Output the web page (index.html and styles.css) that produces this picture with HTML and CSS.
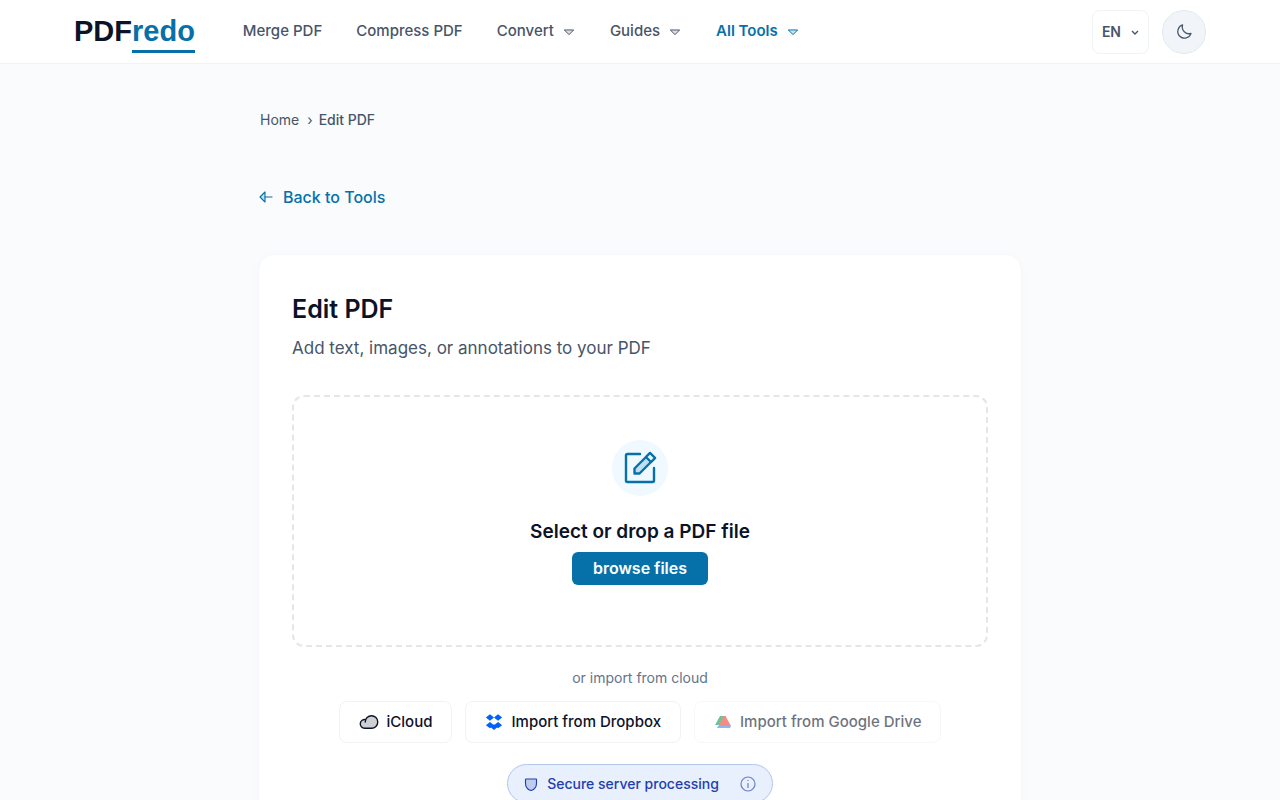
FILE: index.html
```html
<!DOCTYPE html>
<html lang="en">
<head>
<meta charset="utf-8">
<meta name="viewport" content="width=device-width, initial-scale=1">
<title>Edit PDF - PDFredo</title>
<link rel="stylesheet" href="styles.css">
</head>
<body>
<header class="site-header">
  <div class="header-inner">
    <a class="logo" href="#">PDF<span class="logo-accent">redo</span></a>
    <nav class="main-nav" aria-label="Main">
      <a href="#">Merge PDF</a>
      <a href="#">Compress PDF</a>
      <a href="#">Convert <svg class="caret" viewBox="0 0 256 256" aria-hidden="true"><path d="M208 96l-80 80-80-80Z"/></svg></a>
      <a href="#">Guides <svg class="caret" viewBox="0 0 256 256" aria-hidden="true"><path d="M208 96l-80 80-80-80Z"/></svg></a>
      <a class="active" href="#">All Tools <svg class="caret" viewBox="0 0 256 256" aria-hidden="true"><path d="M208 96l-80 80-80-80Z"/></svg></a>
    </nav>
    <div class="header-actions">
      <button class="language" type="button">EN <svg viewBox="0 0 12 12" aria-hidden="true"><path d="M3 5l3 3 3-3"/></svg></button>
      <button class="theme" type="button" aria-label="Dark mode"><svg class="duo" viewBox="0 0 256 256" aria-hidden="true"><path d="M108.110 28.110A96.090 96.090 0 0 0 227.890 147.890 96 96 0 1 1 108.110 28.110Z"/></svg></button>
    </div>
  </div>
</header>
<main class="page">
  <nav class="breadcrumb" aria-label="Breadcrumb">
    <a href="#">Home</a><span class="separator" aria-hidden="true">›</span><span class="current" aria-current="page">Edit PDF</span>
  </nav>
  <a class="back" href="#"><svg class="duo" viewBox="0 0 256 256" aria-hidden="true"><path d="M112 48v160L32 128Z"/><path d="M112 128h112"/></svg>Back to Tools</a>
  <section class="card">
    <h1>Edit PDF</h1>
    <p class="subtitle">Add text, images, or annotations to your PDF</p>
    <div class="dropzone">
      <div class="drop-icon">
        <svg viewBox="0 0 40 40" aria-hidden="true">
          <path d="M20 6H7.500Q6 6 6 7.500v25Q6 34 7.500 34h25q1.500 0 1.500-1.500V20"/>
          <path class="tint" d="M14.500 25.500v-5L30 5l5 5-15.500 15.500Z"/>
          <path class="tip" d="M30 5l5 5-4 4-5-5Z"/>
        </svg>
      </div>
      <h2>Select or drop a PDF file</h2>
      <button class="browse" type="button">browse files</button>
    </div>
    <p class="cloud-label">or import from cloud</p>
    <div class="cloud-row">
      <button class="cloud" type="button"><svg class="duo icloud" viewBox="0 0 256 256" aria-hidden="true"><path d="M80 128a80 80 0 1 1 80 80H72a56 56 0 1 1 13.920-110.270"/></svg>iCloud</button>
      <button class="cloud" type="button"><svg class="dropbox" viewBox="0 0 20 20" aria-hidden="true"><path d="M5.500 1.500L10 5 5.500 8.500 1 5ZM14.500 1.500L19 5l-4.500 3.500L10 5ZM5.500 10l4.500 3.500L5.500 17 1 13.500ZM14.500 10l4.500 3.500-4.500 3.500-4.500-3.500ZM10 12.500l4 3-4 3.500-4-3.500Z"/></svg>Import from Dropbox</button>
      <button class="cloud" type="button" disabled><svg viewBox="0 0 18 18" aria-hidden="true"><path fill="#0f9d58" d="M6 3h6L6.500 12H1Z"/><path fill="#ea4335" d="M9.500 3h2L17 13H4.500Z"/><path fill="#4285f4" d="M4 13h13l-1 2H3Z"/></svg>Import from Google Drive</button>
    </div>
    <button class="secure" type="button">
      <svg class="duo shield" viewBox="0 0 256 256" aria-hidden="true"><path d="M40 114.790V56a8 8 0 0 1 8-8H208a8 8 0 0 1 8 8v58.770c0 84.180-71.310 112.070-85.540 116.800a7.540 7.540 0 0 1-4.920 0C111.310 226.860 40 199 40 114.790Z"/></svg>
      <span>Secure server processing</span>
      <svg class="info" viewBox="0 0 18 18" aria-hidden="true"><circle cx="9" cy="9" r="7"/><path d="M9 8v5M9 5v1"/></svg>
    </button>
  </section>
</main>
</body>
</html>
```

FILE: styles.css
```css
* { box-sizing: border-box; }

body {
  margin: 0;
  background: #f9fbfd;
  color: #0b1329;
  font-family: Inter, "Liberation Sans", sans-serif;
  font-size: 16px;
  line-height: 24px;
}

a { color: inherit; text-decoration: none; }
button { font: inherit; color: inherit; cursor: pointer; }
h1, h2, p { margin: 0; }
svg { flex: none; }

.duo, .caret {
  fill: currentColor;
  fill-opacity: 0.2;
  stroke: currentColor;
  stroke-width: 18;
  stroke-linecap: round;
  stroke-linejoin: round;
}

.site-header { background: #fff; border-bottom: 1px solid #f0f3f6; }

.header-inner {
  display: flex;
  align-items: center;
  max-width: 1180px;
  height: 63px;
  margin: 0 auto;
  padding: 0 24px;
}

.logo {
  display: flex;
  font: bold 29px/34px "Liberation Sans", Arial, sans-serif;
  padding-top: 4px;
}
.logo-accent { color: #0671a9; border-bottom: 3px solid #0671a9; padding-bottom: 2px; }

.main-nav {
  display: flex;
  gap: 34px;
  margin-left: 48px;
  padding-bottom: 2px;
  color: #475569;
  font-size: 15px;
  font-weight: 500;
}
.main-nav a { display: flex; align-items: center; gap: 8px; }
.main-nav .active { color: #0671a9; font-weight: 600; }
.caret { width: 14px; height: 14px; margin-top: 2px; }

.header-actions { display: flex; gap: 13px; margin-left: auto; }

.language {
  display: flex;
  align-items: center;
  gap: 8px;
  height: 44px;
  padding: 0 7px 0 9px;
  border: 1px solid #f0f3f6;
  border-radius: 8px;
  background: #fff;
  color: #475569;
  font-size: 14px;
  font-weight: 600;
}
.language svg { width: 12px; height: 12px; fill: none; stroke: currentColor; stroke-width: 1.4; }

.theme {
  display: grid;
  place-items: center;
  width: 44px;
  height: 44px;
  padding: 0;
  border: 1px solid #e4e9ef;
  border-radius: 50%;
  background: #f1f5f9;
  color: #475569;
}
.theme svg { width: 18px; height: 18px; fill: none; }

.page { max-width: 812px; margin: 0 auto; padding: 44px 24px 0; }

.breadcrumb {
  display: flex;
  padding-left: 2px;
  color: #475569;
  font-size: 14px;
}
.separator { margin: 0 6px 0 8px; }
.current { font-weight: 500; }

.back {
  display: inline-flex;
  align-items: center;
  gap: 9px;
  margin-top: 53px;
  color: #0671a9;
  font-weight: 500;
}
.back svg { width: 16px; height: 16px; }

.card {
  display: flex;
  flex-direction: column;
  margin-top: 43px;
  padding: 34px 33px 40px;
  border: 1px solid #f5f7fa;
  border-radius: 16px;
  background: #fff;
  box-shadow: 0 2px 12px rgba(15, 23, 42, 0.02);
}
.card h1 { font-size: 25px; font-weight: 600; line-height: 40px; }
.subtitle { color: #475569; font-size: 17px; line-height: 28px; margin-top: 5px; }

.dropzone {
  display: flex;
  flex-direction: column;
  align-items: center;
  margin-top: 33px;
  padding: 43px 24px 60px;
  border: 2px dashed #e3e6ea;
  border-radius: 12px;
}
.drop-icon {
  display: grid;
  place-items: center;
  width: 56px;
  height: 56px;
  border-radius: 50%;
  background: #f0f9ff;
  color: #0671a9;
}
.drop-icon svg {
  width: 40px;
  height: 40px;
  fill: none;
  stroke: currentColor;
  stroke-width: 2.4;
  stroke-linejoin: round;
  stroke-linecap: round;
}
.drop-icon .tint { fill: #bddff1; }
.drop-icon .tip { fill: #f0f9ff; }

.dropzone h2 { margin-top: 21px; font-size: 19px; font-weight: 600; line-height: 30px; }
.browse {
  margin-top: 5px;
  height: 33px;
  padding: 0 21px 2px;
  border: 0;
  border-radius: 6px;
  background: #0671a9;
  color: #fff;
  font-weight: 600;
}

.cloud-label { margin-top: 19px; color: #64748b; font-size: 14px; text-align: center; }

.cloud-row {
  display: flex;
  flex-wrap: wrap;
  justify-content: center;
  gap: 13px;
  margin-top: 11px;
}
.cloud {
  display: flex;
  align-items: center;
  gap: 8px;
  height: 42px;
  padding: 0 19px;
  border: 1px solid #f0f3f6;
  border-radius: 8px;
  background: #fff;
  font-size: 15px;
  font-weight: 500;
}
.cloud svg { width: 18px; height: 18px; }
.cloud .icloud { width: 20px; height: 20px; }
.cloud .dropbox { width: 18px; height: 20px; fill: #0061ff; }
.cloud:disabled { opacity: 0.6; cursor: default; }

.secure {
  display: flex;
  align-items: center;
  align-self: center;
  height: 39px;
  margin-top: 21px;
  padding: 0 15px;
  border: 1px solid #b3c6ee;
  border-radius: 20px;
  background: #e8effd;
  color: #1e40af;
  font-size: 14px;
  font-weight: 500;
}
.secure span { margin: 0 20px 0 8px; }
.shield { width: 16px; height: 16px; }
.info { width: 18px; height: 18px; fill: none; stroke: #6a7fc8; stroke-width: 1.2; }
```
